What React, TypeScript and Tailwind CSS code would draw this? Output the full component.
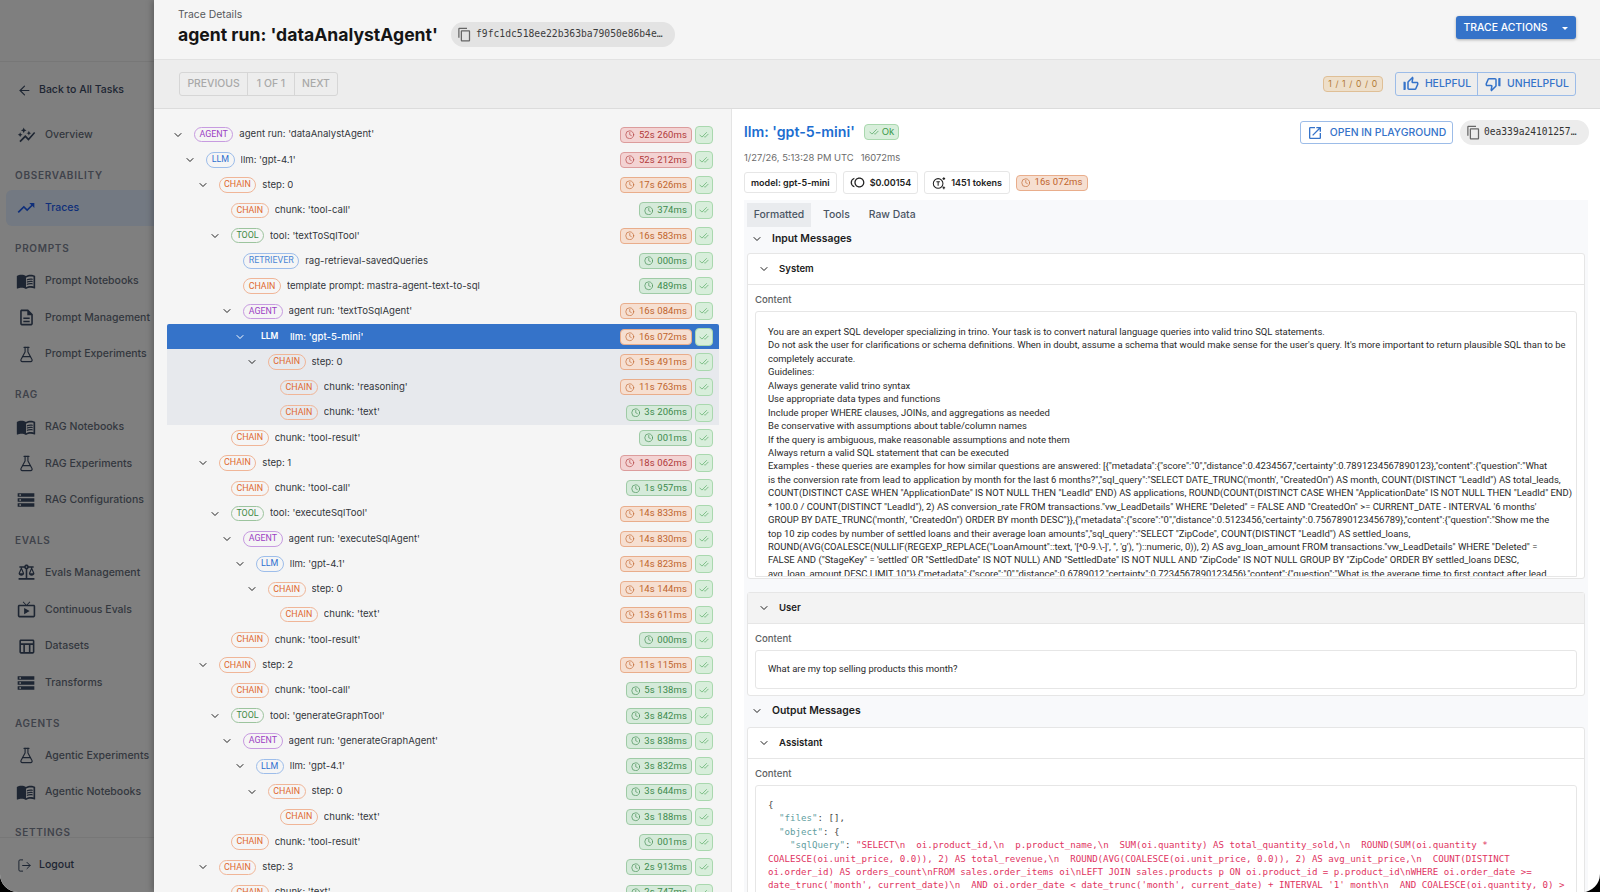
import { ChevronDown, Clock, CheckCheck, FlaskConical, LogOut, ArrowLeft } from 'lucide-react';
import type { ReactNode } from 'react';
import {
  MdAutoGraph,
  MdContentCopy,
  MdMenuBook,
  MdOpenInNew,
  MdOutlineBalance,
  MdOutlineDescription,
  MdOutlineLiveTv,
  MdOutlineTableChart,
  MdOutlineToll,
  MdStorage,
  MdThumbDownOffAlt,
  MdThumbUpOffAlt,
  MdTrendingUp,
} from 'react-icons/md';

type Kind = 'AGENT' | 'LLM' | 'CHAIN' | 'TOOL' | 'RETRIEVER';
type Row = {
  depth: number;
  kind: Kind;
  label: string;
  time: string;
  tone: 'red' | 'orange' | 'green';
  open?: boolean;
  state?: 'selected' | 'child';
};

const rows: Row[] = [
  { depth: 0, kind: 'AGENT', label: "agent run: 'dataAnalystAgent'", time: '52s 260ms', tone: 'red', open: true },
  { depth: 1, kind: 'LLM', label: "llm: 'gpt-4.1'", time: '52s 212ms', tone: 'red', open: true },
  { depth: 2, kind: 'CHAIN', label: 'step: 0', time: '17s 626ms', tone: 'orange', open: true },
  { depth: 3, kind: 'CHAIN', label: "chunk: 'tool-call'", time: '374ms', tone: 'green' },
  { depth: 3, kind: 'TOOL', label: "tool: 'textToSqlTool'", time: '16s 583ms', tone: 'orange', open: true },
  { depth: 4, kind: 'RETRIEVER', label: 'rag-retrieval-savedQueries', time: '000ms', tone: 'green' },
  { depth: 4, kind: 'CHAIN', label: 'template prompt: mastra-agent-text-to-sql', time: '489ms', tone: 'green' },
  { depth: 4, kind: 'AGENT', label: "agent run: 'textToSqlAgent'", time: '16s 084ms', tone: 'orange', open: true },
  { depth: 5, kind: 'LLM', label: "llm: 'gpt-5-mini'", time: '16s 072ms', tone: 'orange', open: true, state: 'selected' },
  { depth: 6, kind: 'CHAIN', label: 'step: 0', time: '15s 491ms', tone: 'orange', open: true, state: 'child' },
  { depth: 7, kind: 'CHAIN', label: "chunk: 'reasoning'", time: '11s 763ms', tone: 'orange', state: 'child' },
  { depth: 7, kind: 'CHAIN', label: "chunk: 'text'", time: '3s 206ms', tone: 'green', state: 'child' },
  { depth: 3, kind: 'CHAIN', label: "chunk: 'tool-result'", time: '001ms', tone: 'green' },
  { depth: 2, kind: 'CHAIN', label: 'step: 1', time: '18s 062ms', tone: 'red', open: true },
  { depth: 3, kind: 'CHAIN', label: "chunk: 'tool-call'", time: '1s 957ms', tone: 'green' },
  { depth: 3, kind: 'TOOL', label: "tool: 'executeSqlTool'", time: '14s 833ms', tone: 'orange', open: true },
  { depth: 4, kind: 'AGENT', label: "agent run: 'executeSqlAgent'", time: '14s 830ms', tone: 'orange', open: true },
  { depth: 5, kind: 'LLM', label: "llm: 'gpt-4.1'", time: '14s 823ms', tone: 'orange', open: true },
  { depth: 6, kind: 'CHAIN', label: 'step: 0', time: '14s 144ms', tone: 'orange', open: true },
  { depth: 7, kind: 'CHAIN', label: "chunk: 'text'", time: '13s 611ms', tone: 'orange' },
  { depth: 3, kind: 'CHAIN', label: "chunk: 'tool-result'", time: '000ms', tone: 'green' },
  { depth: 2, kind: 'CHAIN', label: 'step: 2', time: '11s 115ms', tone: 'orange', open: true },
  { depth: 3, kind: 'CHAIN', label: "chunk: 'tool-call'", time: '5s 138ms', tone: 'green' },
  { depth: 3, kind: 'TOOL', label: "tool: 'generateGraphTool'", time: '3s 842ms', tone: 'green', open: true },
  { depth: 4, kind: 'AGENT', label: "agent run: 'generateGraphAgent'", time: '3s 838ms', tone: 'green', open: true },
  { depth: 5, kind: 'LLM', label: "llm: 'gpt-4.1'", time: '3s 832ms', tone: 'green', open: true },
  { depth: 6, kind: 'CHAIN', label: 'step: 0', time: '3s 644ms', tone: 'green', open: true },
  { depth: 7, kind: 'CHAIN', label: "chunk: 'text'", time: '3s 188ms', tone: 'green' },
  { depth: 3, kind: 'CHAIN', label: "chunk: 'tool-result'", time: '001ms', tone: 'green' },
  { depth: 2, kind: 'CHAIN', label: 'step: 3', time: '2s 913ms', tone: 'green', open: true },
  { depth: 3, kind: 'CHAIN', label: "chunk: 'text'", time: '2s 747ms', tone: 'green' },
];

const kindStyles: Record<Kind, string> = {
  AGENT: 'border-[#c79be0] text-[#9b3fc4]',
  LLM: 'border-[#9dbdea] text-[#2f71d0]',
  CHAIN: 'border-[#f0b597] text-[#e0682e]',
  TOOL: 'border-[#9cc49e] text-[#3f8a45]',
  RETRIEVER: 'border-[#9dbdea] text-[#4a86d6]',
};

const toneStyles = {
  red: 'bg-[#f3d3d3] border-[#dc9c9c] text-[#b13a3a]',
  orange: 'bg-[#f6dfd1] border-[#e9ad8b] text-[#c0642c]',
  green: 'bg-[#d5eada] border-[#9fcba6] text-[#3d8a4d]',
};

const systemLines = [
  'You are an expert SQL developer specializing in trino. Your task is to convert natural language queries into valid trino SQL statements.',
  "Do not ask the user for clarifications or schema definitions. When in doubt, assume a schema that would make sense for the user's query. It's more important to return plausible SQL than to be",
  'completely accurate.',
  'Guidelines:',
  'Always generate valid trino syntax',
  'Use appropriate data types and functions',
  'Include proper WHERE clauses, JOINs, and aggregations as needed',
  'Be conservative with assumptions about table/column names',
  'If the query is ambiguous, make reasonable assumptions and note them',
  'Always return a valid SQL statement that can be executed',
  'Examples - these queries are examples for how similar questions are answered: [{"metadata":{"score":"0","distance":0.4234567,"certainty":0.7891234567890123},"content":{"question":"What',
  'is the conversion rate from lead to application by month for the last 6 months?","sql_query":"SELECT DATE_TRUNC(\'month\', "CreatedOn") AS month, COUNT(DISTINCT "LeadId") AS total_leads,',
  'COUNT(DISTINCT CASE WHEN "ApplicationDate" IS NOT NULL THEN "LeadId" END) AS applications, ROUND(COUNT(DISTINCT CASE WHEN "ApplicationDate" IS NOT NULL THEN "LeadId" END)',
  '* 100.0 / COUNT(DISTINCT "LeadId"), 2) AS conversion_rate FROM transactions."vw_LeadDetails" WHERE "Deleted" = FALSE AND "CreatedOn" >= CURRENT_DATE - INTERVAL \'6 months\'',
  'GROUP BY DATE_TRUNC(\'month\', "CreatedOn") ORDER BY month DESC"}},{"metadata":{"score":"0","distance":0.5123456,"certainty":0.7567890123456789},"content":{"question":"Show me the',
  'top 10 zip codes by number of settled loans and their average loan amounts","sql_query":"SELECT "ZipCode", COUNT(DISTINCT "LeadId") AS settled_loans,',
  'ROUND(AVG(COALESCE(NULLIF(REGEXP_REPLACE("LoanAmount"::text, \'[^0-9.\\-]\', \'\', \'g\'), \'\')::numeric, 0)), 2) AS avg_loan_amount FROM transactions."vw_LeadDetails" WHERE "Deleted" =',
  'FALSE AND ("StageKey" = \'settled\' OR "SettledDate" IS NOT NULL) AND "SettledDate" IS NOT NULL AND "ZipCode" IS NOT NULL GROUP BY "ZipCode" ORDER BY settled_loans DESC,',
  'avg_loan_amount DESC LIMIT 10"}},{"metadata":{"score":"0","distance":0.6789012,"certainty":0.7234567890123456},"content":{"question":"What is the average time to first contact after lead',
];

const codeLines = [
  'COALESCE(oi.unit_price, 0.0)), 2) AS total_revenue,\\n  ROUND(AVG(COALESCE(oi.unit_price, 0.0)), 2) AS avg_unit_price,\\n  COUNT(DISTINCT',
  'oi.order_id) AS orders_count\\nFROM sales.order_items oi\\nLEFT JOIN sales.products p ON oi.product_id = p.product_id\\nWHERE oi.order_date >=',
  "date_trunc('month', current_date)\\n  AND oi.order_date < date_trunc('month', current_date) + INTERVAL '1' month\\n  AND COALESCE(oi.quantity, 0) >",
];

function SideSection({ title, children }: { title: string; children: ReactNode }) {
  return (
    <div className="mb-[4px]">
      <div className="mt-[8px] flex h-[28px] items-center pl-[15px] text-[10px] font-semibold tracking-[0.7px] text-[#3f434b]">
        {title}
      </div>
      {children}
    </div>
  );
}

function SideItem({ icon, label, active = false }: { icon: ReactNode; label: string; active?: boolean }) {
  return (
    <div
      className={`ml-[6px] flex h-[36.7px] items-center gap-[9px] rounded-l-md pl-[10px] text-[10.5px] font-medium whitespace-nowrap ${
        active ? 'bg-[#737982] text-[#0f2f7a]' : 'text-[#33373e]'
      }`}
    >
      <span className={`flex w-[20px] justify-center ${active ? 'text-[#0f2f7a]' : 'text-[#1d2532]'}`}>{icon}</span>
      {label}
    </div>
  );
}

function Sidebar() {
  return (
    <aside className="flex h-full w-[154px] shrink-0 flex-col overflow-hidden bg-[#7f7f7f]">
      <div className="h-[62px] shrink-0 border-b border-[#777777]" />
      <div className="flex h-[56px] shrink-0 items-center gap-[7px] pl-[17px] text-[10.5px] font-medium whitespace-nowrap text-[#1d2532]">
        <ArrowLeft size={15} strokeWidth={1.8} />
        Back to All Tasks
      </div>
      <div className="min-h-0 flex-1 overflow-hidden">
        <div className="-mt-[1px]">
          <SideItem icon={<MdAutoGraph size={19} />} label="Overview" />
        </div>
        <SideSection title="OBSERVABILITY">
          <SideItem active icon={<MdTrendingUp size={20} />} label="Traces" />
        </SideSection>
        <SideSection title="PROMPTS">
          <SideItem icon={<MdMenuBook size={20} />} label="Prompt Notebooks" />
          <SideItem icon={<MdOutlineDescription size={19} />} label="Prompt Management" />
          <SideItem icon={<FlaskConical size={17} strokeWidth={1.6} />} label="Prompt Experiments" />
        </SideSection>
        <SideSection title="RAG">
          <SideItem icon={<MdMenuBook size={20} />} label="RAG Notebooks" />
          <SideItem icon={<FlaskConical size={17} strokeWidth={1.6} />} label="RAG Experiments" />
          <SideItem icon={<MdStorage size={20} />} label="RAG Configurations" />
        </SideSection>
        <SideSection title="EVALS">
          <SideItem icon={<MdOutlineBalance size={19} />} label="Evals Management" />
          <SideItem icon={<MdOutlineLiveTv size={19} />} label="Continuous Evals" />
          <SideItem icon={<MdOutlineTableChart size={19} />} label="Datasets" />
          <SideItem icon={<MdStorage size={20} />} label="Transforms" />
        </SideSection>
        <SideSection title="AGENTS">
          <SideItem icon={<FlaskConical size={17} strokeWidth={1.6} />} label="Agentic Experiments" />
          <SideItem icon={<MdMenuBook size={20} />} label="Agentic Notebooks" />
        </SideSection>
        <SideSection title="SETTINGS">
          <span />
        </SideSection>
      </div>
      <div className="flex h-[55px] shrink-0 items-center gap-[7px] border-t border-[#777777] pl-[17px] text-[10.5px] font-medium text-[#1d2532]">
        <LogOut size={15} strokeWidth={1.6} />
        Logout
      </div>
    </aside>
  );
}

function TimeBadge({ time, tone }: { time: string; tone: Row['tone'] }) {
  return (
    <span className={`flex h-[16px] items-center gap-[4px] rounded-[4px] border px-[4px] font-['Roboto',sans-serif] text-[9.5px] font-normal tracking-[0.1px] whitespace-nowrap ${toneStyles[tone]}`}>
      <Clock size={9.5} strokeWidth={1.6} />
      {time}
    </span>
  );
}

function TreeRow({ row }: { row: Row }) {
  const selected = row.state === 'selected';
  return (
    <div
      className={`flex h-[25.27px] items-center pr-[6px] ${selected ? 'rounded-t-[2px] bg-[#3573c9]' : row.state === 'child' ? 'bg-[#e7e9ed]' : ''}`}
      style={{ paddingLeft: 4 + row.depth * 12.3 }}
    >
      <span className={`flex w-[23px] shrink-0 pl-[1px] ${selected ? 'text-white' : 'text-[#1f1f1f]'}`}>
        {row.open && <ChevronDown size={12} strokeWidth={2} />}
      </span>
      <span
        className={`flex h-[15.5px] shrink-0 items-center rounded-full border px-[4.5px] font-['Roboto',sans-serif] text-[8.9px] ${
          selected ? 'border-transparent font-semibold text-white' : kindStyles[row.kind]
        }`}
      >
        {row.kind}
      </span>
      <span className={`ml-[6px] truncate text-[9.6px] ${selected ? 'font-medium text-white' : 'text-[#33373c]'}`}>{row.label}</span>
      <span className="ml-auto flex shrink-0 items-center gap-[3px]">
        <TimeBadge time={row.time} tone={row.tone} />
        <span className="flex size-[18px] items-center justify-center rounded-[4px] border border-[#a9d8ae] bg-[#d8eedb] text-[#4aa557]">
          <CheckCheck size={10} strokeWidth={1.5} />
        </span>
      </span>
    </div>
  );
}

function SectionHead({ title }: { title: string }) {
  return (
    <div className="flex h-[26px] items-center gap-[9px] pb-[2px] pl-[4px] text-[10.4px] font-semibold text-[#1c1c1c]">
      <ChevronDown size={12} strokeWidth={2} />
      {title}
    </div>
  );
}

function CardHead({ title, hover = false }: { title: string; hover?: boolean }) {
  return (
    <div className={`flex h-[31px] items-center gap-[9px] border-b border-[#e6e6e6] pl-[10px] text-[9.6px] font-semibold text-[#1c1c1c] ${hover ? 'bg-[#f3f3f3]' : ''}`}>
      <ChevronDown size={12} strokeWidth={2} />
      {title}
    </div>
  );
}

function ContentLabel() {
  return <div className="px-[7px] pt-[8px] pb-[5px] text-[9.6px] leading-[13px] font-medium text-[#5c5f63]">Content</div>;
}

export default function App() {
  return (
    <div className="h-[892px] w-[1600px] overflow-hidden bg-black font-['Inter',sans-serif]">
      <div className="flex h-full overflow-hidden rounded-b-[18px] bg-white">
        <Sidebar />
        <main className="flex min-w-0 flex-1 flex-col shadow-[-2px_0_6px_rgba(0,0,0,0.25)]">
          <header className="flex h-[60px] shrink-0 items-start justify-between border-b border-[#e2e2e2] bg-[#f5f5f5] pr-[24px] pl-[24px]">
            <div>
              <div className="mt-[8px] text-[10.4px] leading-[14px] text-[#55585c]">Trace Details</div>
              <div className="flex items-center gap-[13px]">
                <h1 className="text-[17.6px] leading-[24px] font-bold whitespace-nowrap text-[#151515]">agent run: 'dataAnalystAgent'</h1>
                <span className="flex h-[25px] w-[224px] items-center gap-[4px] rounded-full bg-[#e3e3e3] pl-[6px] font-['DejaVu_Sans_Mono',monospace] text-[9.7px] text-[#3c3c3c]">
                  <MdContentCopy size={15} className="text-[#666666]" />
                  f9fc1dc518ee22b363ba79050e86b4e…
                </span>
              </div>
            </div>
            <button className="mt-[16px] flex h-[23px] w-[120px] items-center justify-center gap-[15px] rounded-[3px] bg-[#3573c9] text-[10.4px] font-medium text-white shadow-[0_1px_3px_rgba(0,0,0,0.3)]">
              TRACE ACTIONS
              <span className="mt-[1px] h-0 w-0 border-x-[3.5px] border-t-[3.5px] border-x-transparent border-t-white" />
            </button>
          </header>
          <div className="flex h-[49px] shrink-0 items-center justify-between border-b border-[#dcdcdc] bg-[#ededed] pr-[24px] pl-[25px]">
            <div className="flex h-[24px] overflow-hidden rounded-[3px] border border-[#d6d6d6] text-[10.4px] font-medium text-[#a9a9a9]">
              <span className="flex w-[68px] items-center justify-center border-r border-[#d6d6d6]">PREVIOUS</span>
              <span className="flex w-[47px] items-center justify-center border-r border-[#d6d6d6]">1 OF 1</span>
              <span className="flex w-[42px] items-center justify-center">NEXT</span>
            </div>
            <div className="flex items-center gap-[12px]">
              <span className="flex h-[16px] w-[60px] items-center justify-center rounded-[4px] border border-[#dfbf96] bg-[#eedfca] text-[8.6px] tracking-[0.6px] whitespace-nowrap text-[#b07a35]">
                1 / 1 / 0 / 0
              </span>
              <div className="flex h-[24px] overflow-hidden rounded-[3px] border border-[#9cbce8] text-[10.4px] font-medium text-[#3573c9]">
                <span className="flex w-[82px] items-center justify-center gap-[5px] border-r border-[#9cbce8]">
                  <MdThumbUpOffAlt size={18} />
                  HELPFUL
                </span>
                <span className="flex w-[97px] items-center justify-center gap-[5px]">
                  <MdThumbDownOffAlt size={18} />
                  UNHELPFUL
                </span>
              </div>
            </div>
          </div>
          <div className="flex min-h-0 flex-1">
            <section className="w-[578px] shrink-0 overflow-hidden border-r border-[#e4e4e4] bg-[#f5f5f5] pt-[13px] pr-[12px] pl-[13px]">
              {rows.map((row, i) => (
                <TreeRow key={i} row={row} />
              ))}
            </section>
            <section className="min-w-0 flex-1 overflow-hidden pt-[11px] pl-[12px]">
              <div className="flex items-start justify-between pr-[11px]">
                <div className="flex h-[24px] items-center gap-[9px]">
                  <h2 className="text-[14.2px] font-semibold whitespace-nowrap text-[#1c6dd0]">llm: 'gpt-5-mini'</h2>
                  <span className="flex h-[16px] items-center gap-[3px] rounded-[4px] border border-[#a9d8ae] bg-[#d8eedb] px-[4px] text-[9.6px] text-[#3d9a4d]">
                    <CheckCheck size={10} strokeWidth={1.5} />
                    Ok
                  </span>
                </div>
                <div className="flex items-center gap-[7px]">
                  <span className="flex h-[23px] w-[153px] items-center justify-center gap-[7px] rounded-[3px] border border-[#9cbce8] text-[10.4px] font-medium text-[#3573c9]">
                    <MdOpenInNew size={16} />
                    OPEN IN PLAYGROUND
                  </span>
                  <span className="flex h-[25px] w-[129px] items-center gap-[3px] rounded-full bg-[#ececec] pl-[6px] font-['DejaVu_Sans_Mono',monospace] text-[9.6px] text-[#333333]">
                    <MdContentCopy size={15} className="text-[#666666]" />
                    0ea339a24101257…
                  </span>
                </div>
              </div>
              <div className="mt-[5px] flex h-[17px] items-center gap-[7px] text-[9.4px] text-[#6b6b6b]">
                <span>1/27/26, 5:13:28 PM UTC</span>
                <span>16072ms</span>
              </div>
              <div className="mt-[4px] flex h-[23px] items-center gap-[6px] text-[9px] font-semibold text-[#222222]">
                <span className="flex h-[21px] items-center rounded-[3px] border border-[#e6e6e6] px-[6px]">model: gpt-5-mini</span>
                <span className="flex h-[23px] items-center gap-[5px] rounded-[3px] border border-[#e6e6e6] px-[6px]">
                  <MdOutlineToll size={15} />
                  $0.00154
                </span>
                <span className="flex h-[23px] items-center gap-[5px] rounded-[3px] border border-[#e6e6e6] px-[7px]">
                  <svg viewBox="0 0 16 16" className="size-[14px]" fill="none" stroke="currentColor" strokeWidth="1.2">
                    <circle cx="7" cy="8.5" r="5.5" />
                    <path d="M5 6.5h4M7 6.5v4.5M13.5 1.5v3M12 3h3M13.5 12v3M12 13.5h3" />
                  </svg>
                  1451 tokens
                </span>
                <TimeBadge time="16s 072ms" tone="orange" />
              </div>
              <div className="mt-[6px] mr-[12px] h-[800px] bg-[#f8f9fb] px-[3px] pt-[3px]">
                <div className="flex h-[24px] items-center text-[10.4px] font-medium text-[#4b5563]">
                  <span className="flex h-full w-[64px] items-center justify-center bg-[#e9ebee]">Formatted</span>
                  <span className="ml-[12px]">Tools</span>
                  <span className="ml-[19px]">Raw Data</span>
                </div>
                <SectionHead title="Input Messages" />
                <div className="rounded-[3px] border border-[#e6e6e6] bg-white pb-[1px]">
                  <CardHead title="System" />
                  <ContentLabel />
                  <div className="mx-[7px] h-[266px] overflow-hidden rounded-t-[3px] border border-[#e6e6e6] px-[12px] pt-[13px] font-['Roboto',sans-serif]">
                    {systemLines.map((line, i) => (
                      <div key={i} className="h-[13.45px] text-[9.45px] leading-[13.45px] whitespace-nowrap text-[#2a2a2a]">
                        {line}
                      </div>
                    ))}
                  </div>
                </div>
                <div className="mt-[13px] rounded-[3px] border border-[#e6e6e6] bg-white pb-[6px]">
                  <CardHead title="User" hover />
                  <ContentLabel />
                  <div className="mx-[7px] flex h-[39px] items-center rounded-[3px] border border-[#e6e6e6] px-[12px] font-['Roboto',sans-serif] text-[9.45px] text-[#2a2a2a]">
                    What are my top selling products this month?
                  </div>
                </div>
                <div className="mt-[3px]">
                  <SectionHead title="Output Messages" />
                </div>
                <div className="mt-[2px] rounded-[3px] border border-[#e6e6e6] bg-white">
                  <CardHead title="Assistant" />
                  <ContentLabel />
                  <div className="mx-[7px] h-[200px] rounded-t-[3px] border border-[#e6e6e6] px-[12px] pt-[13px] font-['DejaVu_Sans_Mono',monospace] text-[9.15px] leading-[13.4px] whitespace-pre">
                    <div className="text-[#444444]">{'{'}</div>
                    <div className="text-[#444444]">
                      {'  '}
                      <span className="text-[#5f9ea0]">"files"</span>: [],
                    </div>
                    <div className="text-[#444444]">
                      {'  '}
                      <span className="text-[#5f9ea0]">"object"</span>: {'{'}
                    </div>
                    <div className="text-[#e0345f]">
                      {'    '}
                      <span className="text-[#5f9ea0]">"sqlQuery"</span>
                      <span className="text-[#444444]">: </span>
                      {'"SELECT\\n  oi.product_id,\\n  p.product_name,\\n  SUM(oi.quantity) AS total_quantity_sold,\\n  ROUND(SUM(oi.quantity *'}
                    </div>
                    {codeLines.map((line, i) => (
                      <div key={i} className="text-[#e0345f]">
                        {line}
                      </div>
                    ))}
                  </div>
                </div>
              </div>
            </section>
          </div>
        </main>
      </div>
    </div>
  );
}
